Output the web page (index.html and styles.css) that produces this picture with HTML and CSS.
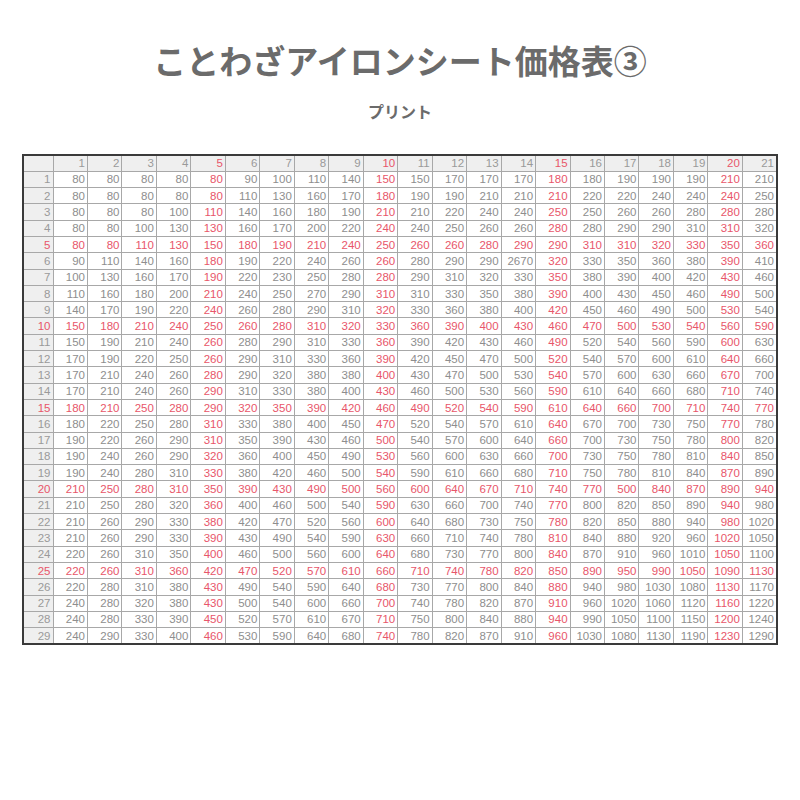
FILE: index.html
```html
<!DOCTYPE html>
<html lang="ja">
<head>
<meta charset="utf-8">
<title>ことわざアイロンシート価格表③</title>
<link rel="stylesheet" href="styles.css">
</head>
<body>
<div class="page">
<h1 class="title">ことわざアイロンシート価格表③</h1>
<p class="subtitle">プリント</p>
<table class="price">
<colgroup><col class="c-head"><col span="21"></colgroup>
<thead>
<tr><th></th><th>1</th><th>2</th><th>3</th><th>4</th><th>5</th><th>6</th><th>7</th><th>8</th><th>9</th><th>10</th><th>11</th><th>12</th><th>13</th><th>14</th><th>15</th><th>16</th><th>17</th><th>18</th><th>19</th><th>20</th><th>21</th></tr>
</thead>
<tbody>
<tr><th>1</th><td>80</td><td>80</td><td>80</td><td>80</td><td>80</td><td>90</td><td>100</td><td>110</td><td>140</td><td>150</td><td>150</td><td>170</td><td>170</td><td>170</td><td>180</td><td>180</td><td>190</td><td>190</td><td>190</td><td>210</td><td>210</td></tr>
<tr><th>2</th><td>80</td><td>80</td><td>80</td><td>80</td><td>80</td><td>110</td><td>130</td><td>160</td><td>170</td><td>180</td><td>190</td><td>190</td><td>210</td><td>210</td><td>210</td><td>220</td><td>220</td><td>240</td><td>240</td><td>240</td><td>250</td></tr>
<tr><th>3</th><td>80</td><td>80</td><td>80</td><td>100</td><td>110</td><td>140</td><td>160</td><td>180</td><td>190</td><td>210</td><td>210</td><td>220</td><td>240</td><td>240</td><td>250</td><td>250</td><td>260</td><td>260</td><td>280</td><td>280</td><td>280</td></tr>
<tr><th>4</th><td>80</td><td>80</td><td>100</td><td>130</td><td>130</td><td>160</td><td>170</td><td>200</td><td>220</td><td>240</td><td>240</td><td>250</td><td>260</td><td>260</td><td>280</td><td>280</td><td>290</td><td>290</td><td>310</td><td>310</td><td>320</td></tr>
<tr class="red"><th>5</th><td>80</td><td>80</td><td>110</td><td>130</td><td>150</td><td>180</td><td>190</td><td>210</td><td>240</td><td>250</td><td>260</td><td>260</td><td>280</td><td>290</td><td>290</td><td>310</td><td>310</td><td>320</td><td>330</td><td>350</td><td>360</td></tr>
<tr><th>6</th><td>90</td><td>110</td><td>140</td><td>160</td><td>180</td><td>190</td><td>220</td><td>240</td><td>260</td><td>260</td><td>280</td><td>290</td><td>290</td><td>2670</td><td>320</td><td>330</td><td>350</td><td>360</td><td>380</td><td>390</td><td>410</td></tr>
<tr><th>7</th><td>100</td><td>130</td><td>160</td><td>170</td><td>190</td><td>220</td><td>230</td><td>250</td><td>280</td><td>280</td><td>290</td><td>310</td><td>320</td><td>330</td><td>350</td><td>380</td><td>390</td><td>400</td><td>420</td><td>430</td><td>460</td></tr>
<tr><th>8</th><td>110</td><td>160</td><td>180</td><td>200</td><td>210</td><td>240</td><td>250</td><td>270</td><td>290</td><td>310</td><td>310</td><td>330</td><td>350</td><td>380</td><td>390</td><td>400</td><td>430</td><td>450</td><td>460</td><td>490</td><td>500</td></tr>
<tr><th>9</th><td>140</td><td>170</td><td>190</td><td>220</td><td>240</td><td>260</td><td>280</td><td>290</td><td>310</td><td>320</td><td>330</td><td>360</td><td>380</td><td>400</td><td>420</td><td>450</td><td>460</td><td>490</td><td>500</td><td>530</td><td>540</td></tr>
<tr class="red"><th>10</th><td>150</td><td>180</td><td>210</td><td>240</td><td>250</td><td>260</td><td>280</td><td>310</td><td>320</td><td>330</td><td>360</td><td>390</td><td>400</td><td>430</td><td>460</td><td>470</td><td>500</td><td>530</td><td>540</td><td>560</td><td>590</td></tr>
<tr><th>11</th><td>150</td><td>190</td><td>210</td><td>240</td><td>260</td><td>280</td><td>290</td><td>310</td><td>330</td><td>360</td><td>390</td><td>420</td><td>430</td><td>460</td><td>490</td><td>520</td><td>540</td><td>560</td><td>590</td><td>600</td><td>630</td></tr>
<tr><th>12</th><td>170</td><td>190</td><td>220</td><td>250</td><td>260</td><td>290</td><td>310</td><td>330</td><td>360</td><td>390</td><td>420</td><td>450</td><td>470</td><td>500</td><td>520</td><td>540</td><td>570</td><td>600</td><td>610</td><td>640</td><td>660</td></tr>
<tr><th>13</th><td>170</td><td>210</td><td>240</td><td>260</td><td>280</td><td>290</td><td>320</td><td>380</td><td>380</td><td>400</td><td>430</td><td>470</td><td>500</td><td>530</td><td>540</td><td>570</td><td>600</td><td>630</td><td>660</td><td>670</td><td>700</td></tr>
<tr><th>14</th><td>170</td><td>210</td><td>240</td><td>260</td><td>290</td><td>310</td><td>330</td><td>380</td><td>400</td><td>430</td><td>460</td><td>500</td><td>530</td><td>560</td><td>590</td><td>610</td><td>640</td><td>660</td><td>680</td><td>710</td><td>740</td></tr>
<tr class="red"><th>15</th><td>180</td><td>210</td><td>250</td><td>280</td><td>290</td><td>320</td><td>350</td><td>390</td><td>420</td><td>460</td><td>490</td><td>520</td><td>540</td><td>590</td><td>610</td><td>640</td><td>660</td><td>700</td><td>710</td><td>740</td><td>770</td></tr>
<tr><th>16</th><td>180</td><td>220</td><td>250</td><td>280</td><td>310</td><td>330</td><td>380</td><td>400</td><td>450</td><td>470</td><td>520</td><td>540</td><td>570</td><td>610</td><td>640</td><td>670</td><td>700</td><td>730</td><td>750</td><td>770</td><td>780</td></tr>
<tr><th>17</th><td>190</td><td>220</td><td>260</td><td>290</td><td>310</td><td>350</td><td>390</td><td>430</td><td>460</td><td>500</td><td>540</td><td>570</td><td>600</td><td>640</td><td>660</td><td>700</td><td>730</td><td>750</td><td>780</td><td>800</td><td>820</td></tr>
<tr><th>18</th><td>190</td><td>240</td><td>260</td><td>290</td><td>320</td><td>360</td><td>400</td><td>450</td><td>490</td><td>530</td><td>560</td><td>600</td><td>630</td><td>660</td><td>700</td><td>730</td><td>750</td><td>780</td><td>810</td><td>840</td><td>850</td></tr>
<tr><th>19</th><td>190</td><td>240</td><td>280</td><td>310</td><td>330</td><td>380</td><td>420</td><td>460</td><td>500</td><td>540</td><td>590</td><td>610</td><td>660</td><td>680</td><td>710</td><td>750</td><td>780</td><td>810</td><td>840</td><td>870</td><td>890</td></tr>
<tr class="red"><th>20</th><td>210</td><td>250</td><td>280</td><td>310</td><td>350</td><td>390</td><td>430</td><td>490</td><td>500</td><td>560</td><td>600</td><td>640</td><td>670</td><td>710</td><td>740</td><td>770</td><td>500</td><td>840</td><td>870</td><td>890</td><td>940</td></tr>
<tr><th>21</th><td>210</td><td>250</td><td>280</td><td>320</td><td>360</td><td>400</td><td>460</td><td>500</td><td>540</td><td>590</td><td>630</td><td>660</td><td>700</td><td>740</td><td>770</td><td>800</td><td>820</td><td>850</td><td>890</td><td>940</td><td>980</td></tr>
<tr><th>22</th><td>210</td><td>260</td><td>290</td><td>330</td><td>380</td><td>420</td><td>470</td><td>520</td><td>560</td><td>600</td><td>640</td><td>680</td><td>730</td><td>750</td><td>780</td><td>820</td><td>850</td><td>880</td><td>940</td><td>980</td><td>1020</td></tr>
<tr><th>23</th><td>210</td><td>260</td><td>290</td><td>330</td><td>390</td><td>430</td><td>490</td><td>540</td><td>590</td><td>630</td><td>660</td><td>710</td><td>740</td><td>780</td><td>810</td><td>840</td><td>880</td><td>920</td><td>960</td><td>1020</td><td>1050</td></tr>
<tr><th>24</th><td>220</td><td>260</td><td>310</td><td>350</td><td>400</td><td>460</td><td>500</td><td>560</td><td>600</td><td>640</td><td>680</td><td>730</td><td>770</td><td>800</td><td>840</td><td>870</td><td>910</td><td>960</td><td>1010</td><td>1050</td><td>1100</td></tr>
<tr class="red"><th>25</th><td>220</td><td>260</td><td>310</td><td>360</td><td>420</td><td>470</td><td>520</td><td>570</td><td>610</td><td>660</td><td>710</td><td>740</td><td>780</td><td>820</td><td>850</td><td>890</td><td>950</td><td>990</td><td>1050</td><td>1090</td><td>1130</td></tr>
<tr><th>26</th><td>220</td><td>280</td><td>310</td><td>380</td><td>430</td><td>490</td><td>540</td><td>590</td><td>640</td><td>680</td><td>730</td><td>770</td><td>800</td><td>840</td><td>880</td><td>940</td><td>980</td><td>1030</td><td>1080</td><td>1130</td><td>1170</td></tr>
<tr><th>27</th><td>240</td><td>280</td><td>320</td><td>380</td><td>430</td><td>500</td><td>540</td><td>600</td><td>660</td><td>700</td><td>740</td><td>780</td><td>820</td><td>870</td><td>910</td><td>960</td><td>1020</td><td>1060</td><td>1120</td><td>1160</td><td>1220</td></tr>
<tr><th>28</th><td>240</td><td>280</td><td>330</td><td>390</td><td>450</td><td>520</td><td>570</td><td>610</td><td>670</td><td>710</td><td>750</td><td>800</td><td>840</td><td>880</td><td>940</td><td>990</td><td>1050</td><td>1100</td><td>1150</td><td>1200</td><td>1240</td></tr>
<tr><th>29</th><td>240</td><td>290</td><td>330</td><td>400</td><td>460</td><td>530</td><td>590</td><td>640</td><td>680</td><td>740</td><td>780</td><td>820</td><td>870</td><td>910</td><td>960</td><td>1030</td><td>1080</td><td>1130</td><td>1190</td><td>1230</td><td>1290</td></tr>
</tbody>
</table>
</div>
</body>
</html>
```

FILE: styles.css
```css
html, body {
  margin: 0;
  padding: 0;
  background: #ffffff;
}

.page {
  width: 800px;
  padding-top: 40px;
  display: flex;
  flex-direction: column;
  align-items: center;
  font-family: "Noto Sans CJK JP", "Noto Sans", sans-serif;
}

.title {
  margin: 0;
  font-size: 33px;
  line-height: 40px;
  font-weight: 700;
  color: #6b6b6b;
  letter-spacing: 0;
}

.subtitle {
  margin: 21px 0 0;
  font-size: 16px;
  line-height: 20px;
  font-weight: 700;
  color: #6b6b6b;
}

.price {
  margin-top: 33px;
  width: 756px;
  table-layout: fixed;
  border-collapse: collapse;
  border: 2px solid #3a3a3a;
  font-family: "Liberation Sans", Arial, sans-serif;
  font-size: 11.5px;
  color: #8e8e8e;
}

.c-head {
  width: 30px;
}

.price tr {
  height: 16.3px;
}

.price th,
.price td {
  border: 1px solid #a8a8a8;
  padding: 0 2px 0 0;
  text-align: right;
  font-weight: 400;
  line-height: 14px;
  white-space: nowrap;
  overflow: hidden;
}

.price thead th,
.price tbody th {
  background: #efefef;
  color: #9a9a9a;
}

.price td {
  background: #ffffff;
}

.price tr > :nth-child(6),
.price tr > :nth-child(11),
.price tr > :nth-child(16),
.price tr > :nth-child(21),
.price tr.red > th,
.price tr.red > td {
  color: #e8566a;
}
```
